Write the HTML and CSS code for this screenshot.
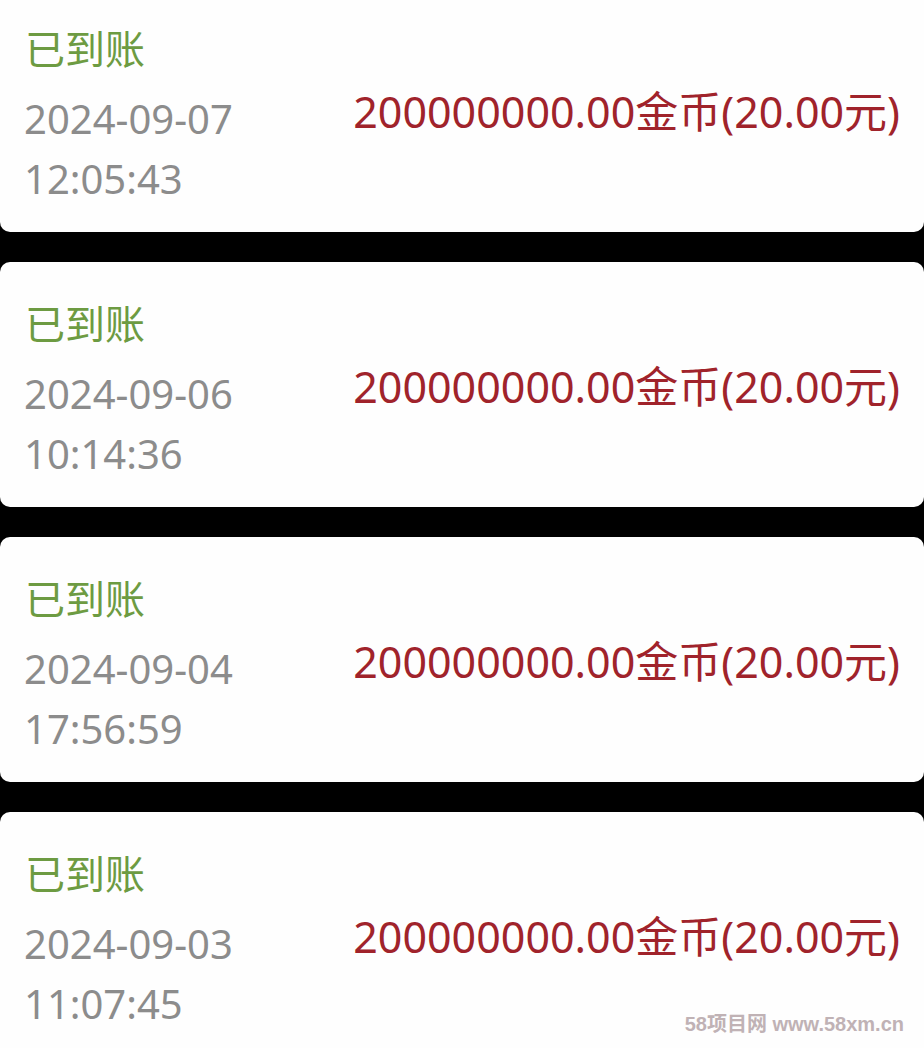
FILE: index.html
```html
<!DOCTYPE html>
<html lang="zh-CN">
<head>
<meta charset="utf-8">
<title>提现记录</title>
<link rel="stylesheet" href="styles.css">
</head>
<body>
<div class="list">
  <div class="card">
    <div class="info">
      <div class="status">已到账</div>
      <div class="date">2024-09-07</div>
      <div class="time">12:05:43</div>
    </div>
    <div class="amount">200000000.00金币(20.00元)</div>
  </div>
  <div class="card">
    <div class="info">
      <div class="status">已到账</div>
      <div class="date">2024-09-06</div>
      <div class="time">10:14:36</div>
    </div>
    <div class="amount">200000000.00金币(20.00元)</div>
  </div>
  <div class="card">
    <div class="info">
      <div class="status">已到账</div>
      <div class="date">2024-09-04</div>
      <div class="time">17:56:59</div>
    </div>
    <div class="amount">200000000.00金币(20.00元)</div>
  </div>
  <div class="card">
    <div class="info">
      <div class="status">已到账</div>
      <div class="date">2024-09-03</div>
      <div class="time">11:07:45</div>
    </div>
    <div class="amount">200000000.00金币(20.00元)</div>
  </div>
</div>
<div class="watermark">58项目网 www.58xm.cn</div>
</body>
</html>
```

FILE: styles.css
```css
html, body {
  margin: 0;
  padding: 0;
  background: #000;
}
body {
  width: 924px;
  height: 1048px;
  overflow: hidden;
  position: relative;
  font-family: "Noto Sans", "Noto Sans CJK SC", sans-serif;
}
.list {
  display: flex;
  flex-direction: column;
  gap: 30px;
  margin-top: -13px;
}
.card {
  box-sizing: border-box;
  height: 245px;
  background: #fefefe;
  border-radius: 10px;
  display: flex;
  justify-content: space-between;
  align-items: center;
  padding: 0 24px 0 24px;
}
.info {
  display: flex;
  flex-direction: column;
  align-self: flex-start;
  padding-top: 35px;
}
.status {
  font-family: "Noto Sans CJK SC", sans-serif;
  font-size: 40px;
  line-height: 50px;
  color: #6d9b42;
  padding-left: 1px;
}
.date, .time {
  font-size: 40px;
  line-height: 60px;
  color: #8c8c8c;
}
.date {
  margin-top: 17px;
}
.amount {
  font-size: 43px;
  line-height: 60px;
  color: #a0232b;
  margin-top: 4px;
  white-space: nowrap;
}
.watermark {
  position: absolute;
  right: 20px;
  bottom: 12px;
  font-family: "Liberation Sans", Arial, "Noto Sans CJK SC", sans-serif;
  font-weight: bold;
  font-size: 20px;
  line-height: 24px;
  color: #c0b2b5;
}
```
